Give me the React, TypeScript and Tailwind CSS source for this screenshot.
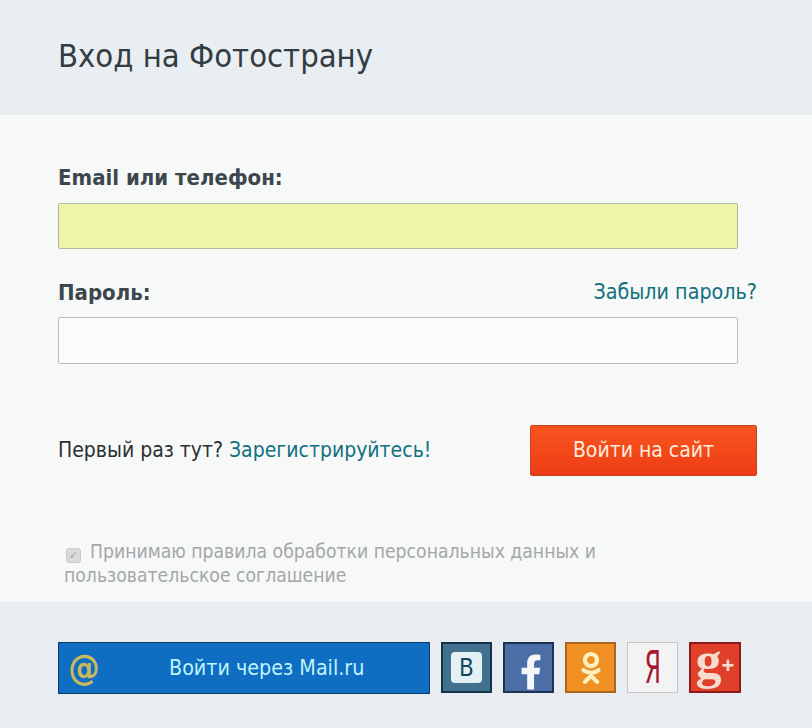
import { FaFacebookF, FaOdnoklassniki } from "react-icons/fa";

export default function App() {
  return (
    <div className="w-[812px] h-[728px] flex flex-col overflow-hidden bg-[#f7f8f8] text-[#2e3a40] font-['DejaVu_Sans_Condensed','DejaVu_Sans',sans-serif]">
      <header className="h-[115px] shrink-0 bg-[#e9eef3] pl-[58px] pt-[34px]">
        <h1 className="text-[32.5px] leading-[44px] font-normal text-[#333c42]">Вход на Фотострану</h1>
      </header>

      <main className="flex-1 pl-[58px] pr-[55px] flex flex-col">
        <label className="mt-[49px] text-[22px] leading-[28px] font-bold text-[#3c474d]">Email или телефон:</label>
        <div className="mt-[11px] w-[680px] h-[46px] bg-[#eef5a9] border border-[#b5b8a0] rounded-[2px]" />
        <div className="mt-[29px] flex items-center justify-between h-[28px]">
          <span className="text-[22px] font-bold text-[#3c474d]">Пароль:</span>
          <a className="text-[21.3px] text-[#12707f]">Забыли пароль?</a>
        </div>
        <div className="mt-[11px] w-[680px] h-[47px] bg-[#fbfbfb] border border-[#b9bcbd] rounded-[2px]" />
        <div className="mt-[61px] flex items-center justify-between">
          <p className="text-[21px] text-[#2b2f31]">
            Первый раз тут? <a className="text-[#12707f]">Зарегистрируйтесь!</a>
          </p>
          <button className="w-[227px] h-[51px] rounded-[2px] border border-[#c9421e] bg-gradient-to-b from-[#f8541f] to-[#ee3c16] text-[#fdeadb] text-[21px]">
            Войти на сайт
          </button>
        </div>
        <div className="mt-[64px] text-[19.2px] leading-[24px] text-[#a3a7aa] ml-[6px]">
          <span className="inline-flex items-center justify-center align-[-1px] w-[15px] h-[15px] ml-[2px] mr-[9px] rounded-[3px] bg-[#d9dadb] border border-[#c8cacb] text-[#a0a3a5] text-[11px] leading-none">✓</span>
          Принимаю правила обработки персональных данных и
          <br />
          пользовательское соглашение
        </div>
      </main>

      <footer className="h-[126px] shrink-0 bg-[#e9edf1] pl-[58px] pt-[40px] flex items-start">
        <button className="w-[372px] h-[52px] flex items-center bg-[#0f6dc2] border border-[#0d3f6e] text-[#bff3fb] text-[21.3px]">
          <span className="w-[30px] h-[30px] ml-[10px] flex items-center justify-center rounded-full text-[#c9b95e] text-[35px] leading-none font-bold">@</span>
          <span className="ml-[70px]">Войти через Mail.ru</span>
        </button>
        <div className="ml-[11px] w-[51px] h-[51px] flex items-center justify-center bg-[#42708f] border-2 border-[#123348]">
          <span className="w-[31px] h-[31px] rounded-[4px] bg-[#e3f1f5] flex items-center justify-center text-[#154a5e] text-[24px] leading-none">В</span>
        </div>
        <div className="ml-[11px] w-[51px] h-[51px] flex items-end justify-center bg-[#4a6ea5] border-2 border-[#1b3350] pl-[4px]">
          <FaFacebookF className="w-[22px] h-[38px] text-[#f6f7fb]" />
        </div>
        <div className="ml-[11px] w-[51px] h-[51px] flex items-center justify-center bg-[#f08f22] border-2 border-[#a8651c]">
          <FaOdnoklassniki className="w-[30px] h-[32px] text-[#fdf0c0]" />
        </div>
        <div className="ml-[11px] w-[51px] h-[51px] flex items-center justify-center bg-[#f3f3f3] border border-[#c4c6c6]">
          <span className="text-[#a5182f] text-[44px] leading-none scale-x-[0.6]">Я</span>
        </div>
        <div className="ml-[11px] w-[52px] h-[51px] flex items-center justify-center bg-[#e0402a] border-2 border-[#8a1d1c] text-[#f8dcd0] font-['Liberation_Serif',serif] font-bold">
          <span className="text-[52px] leading-[44px] -mt-[14px]">g</span>
          <span className="text-[22px] leading-[24px] -mt-[4px] font-['Liberation_Sans',sans-serif]">+</span>
        </div>
      </footer>
    </div>
  );
}
